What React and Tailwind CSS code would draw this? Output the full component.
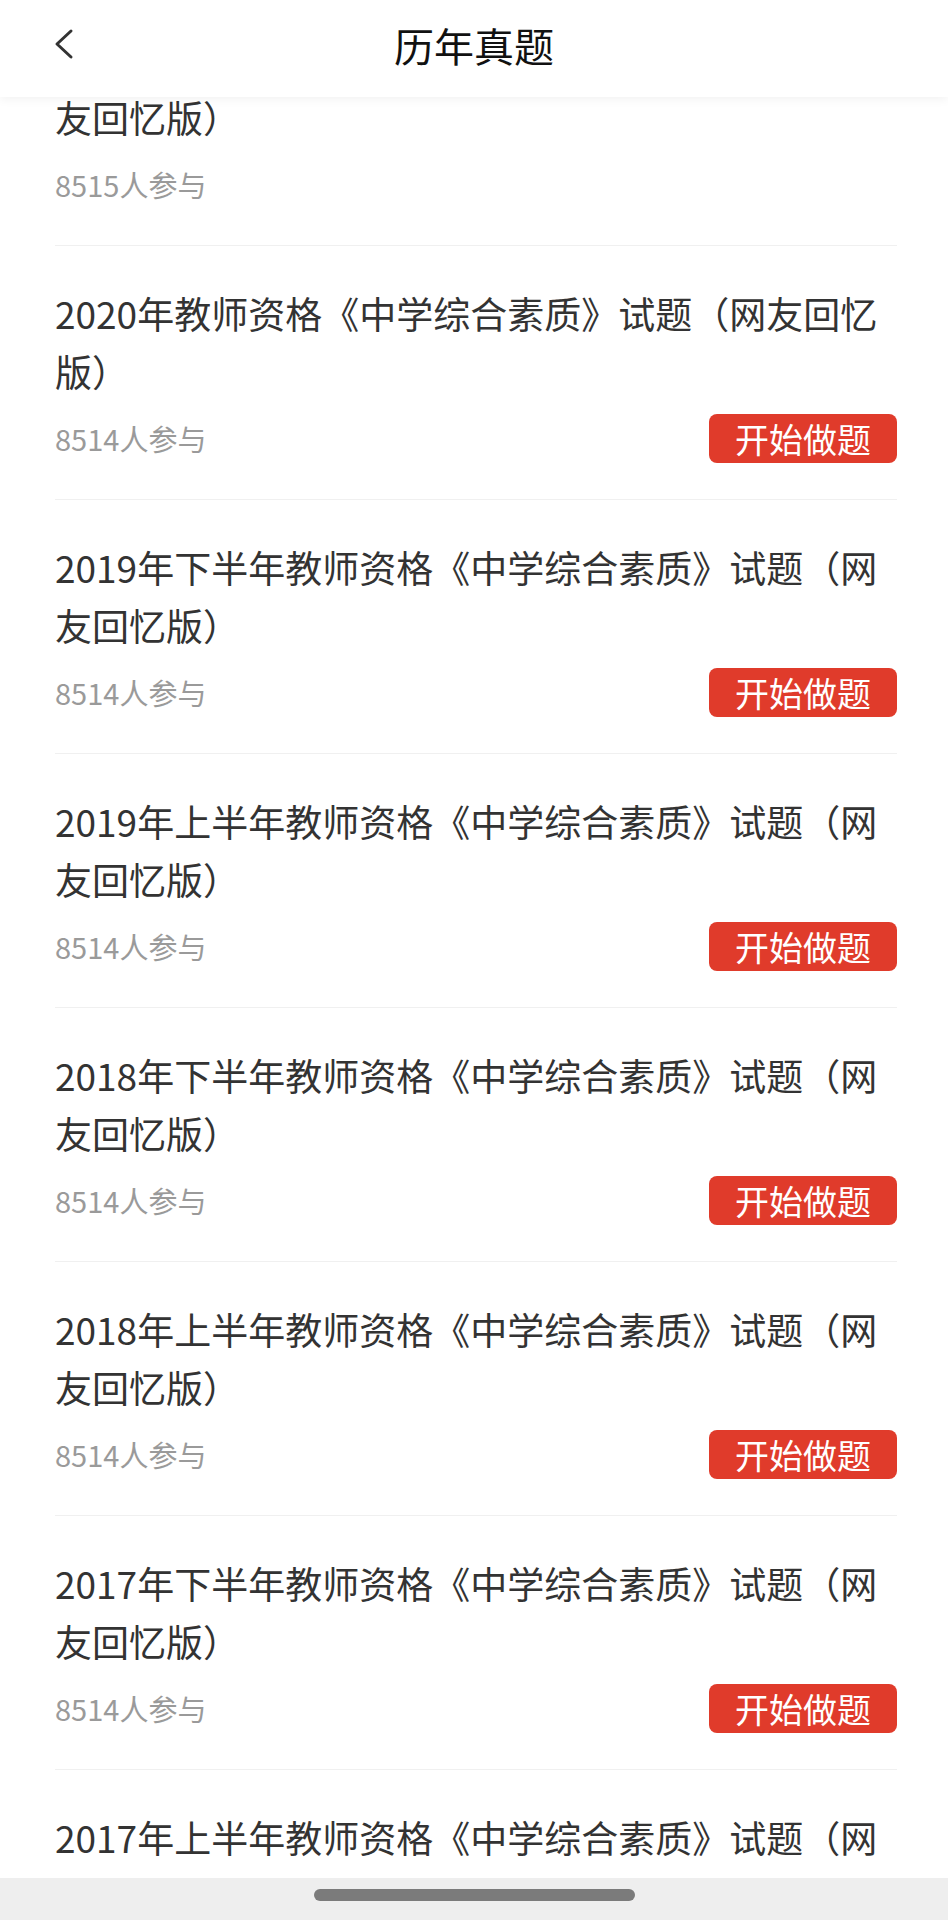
import React from 'react';

const items = [
  { title: '2020年上半年教师资格《中学综合素质》试题（网友回忆版）', count: 8515, button: false },
  { title: '2020年教师资格《中学综合素质》试题（网友回忆版）', count: 8514, button: true },
  { title: '2019年下半年教师资格《中学综合素质》试题（网友回忆版）', count: 8514, button: true },
  { title: '2019年上半年教师资格《中学综合素质》试题（网友回忆版）', count: 8514, button: true },
  { title: '2018年下半年教师资格《中学综合素质》试题（网友回忆版）', count: 8514, button: true },
  { title: '2018年上半年教师资格《中学综合素质》试题（网友回忆版）', count: 8514, button: true },
  { title: '2017年下半年教师资格《中学综合素质》试题（网友回忆版）', count: 8514, button: true },
  { title: '2017年上半年教师资格《中学综合素质》试题（网友回忆版）', count: 8514, button: true },
];

const font = { fontFamily: '"Noto Sans CJK SC", "Noto Sans", sans-serif' };

const App = () => {
  return (
    <div className="relative w-[948px] h-[1920px] overflow-hidden bg-white" style={font}>
      {/* 列表 */}
      <div className="mt-[-8px] pl-[55px] pr-[51px]">
        {items.map((item, idx) => (
          <div key={idx} className="pt-[38px] pb-[36px] border-b border-[#f0f0f0]">
            <div className="text-[37px] leading-[58px] text-[#333333]">{item.title}</div>
            <div className="mt-[14px] h-[49px] flex items-center justify-between">
              <span className="text-[29px] text-[#9a9a9a]">{item.count}人参与</span>
              {item.button && (
                <button className="w-[188px] h-[49px] rounded-[8px] bg-[#e03b2b] text-white text-[34px] leading-none flex items-center justify-center">
                  开始做题
                </button>
              )}
            </div>
          </div>
        ))}
      </div>

      {/* 顶部导航 */}
      <div className="absolute top-0 left-0 right-0 h-[97px] bg-white flex items-center justify-center shadow-[0_2px_10px_rgba(0,0,0,0.06)]">
        <svg className="absolute left-[52px] top-[28px]" width="24" height="32" viewBox="0 0 24 32" fill="none">
          <polyline points="19,3 5,16 19,29" stroke="#333" strokeWidth="3" strokeLinecap="round" strokeLinejoin="round" />
        </svg>
        <span className="text-[40px] text-[#111111] leading-none mt-[-8px]">历年真题</span>
      </div>

      {/* 底部手势条 */}
      <div className="absolute bottom-0 left-0 right-0 h-[42px] bg-[#eeeeee] flex justify-center">
        <div className="mt-[11px] w-[321px] h-[12px] rounded-full bg-[#7b7b7b]" />
      </div>
    </div>
  );
};

export default App;
